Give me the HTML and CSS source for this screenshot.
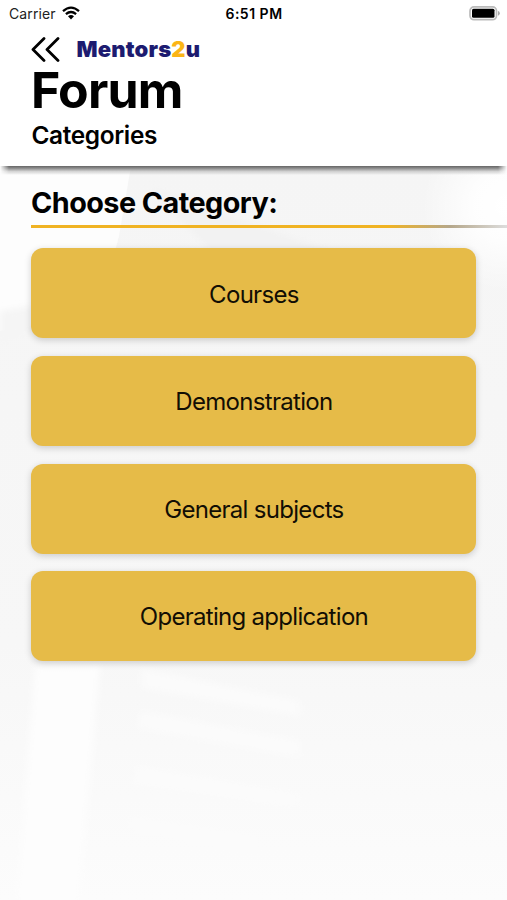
FILE: index.html
```html
<!DOCTYPE html>
<html lang="en">
<head>
<meta charset="utf-8">
<title>Mentors2u Forum</title>
<link rel="stylesheet" href="styles.css">
</head>
<body>
<header class="header">
  <div class="status">
    <div class="carrier"><span class="carrier-name">Carrier</span>
      <svg class="wifi" viewBox="0 0 18 14"><g fill="none" stroke="#000" stroke-width="2.3"><path d="M1 5.1Q9-1.9 17 5.1"/><path d="M3.9 8.2Q9 3.9 14.1 8.2"/></g><path d="M6 10.3Q9 7.8 12 10.3L9 13.4Z"/></svg>
    </div>
    <div class="time">6:51 PM</div>
    <svg class="battery" viewBox="0 0 32 15"><rect x="1" y=".9" width="26.5" height="12.8" rx="4" fill="#fff" stroke="#bbb" stroke-width="1.7"/><rect x="3" y="2.8" width="22.5" height="9" rx="1.5"/><path d="M29 5Q30.8 5.5 30.8 7.3T29 9.7Z" fill="#aaa"/></svg>
  </div>
  <div class="brand">
    <svg class="back" viewBox="0 0 29 25"><g fill="none" stroke="#000" stroke-width="2.8" stroke-linecap="round" stroke-linejoin="round"><path d="M13 1.5L2 12.5L13 23.5"/><path d="M27 1.5L16 12.5L27 23.5"/></g></svg>
    <div class="logo">Mentors<span class="two">2</span>u</div>
  </div>
  <h1 class="title">Forum</h1>
  <h2 class="subtitle">Categories</h2>
</header>
<main class="content">
  <svg class="backdrop" viewBox="0 0 507 734" preserveAspectRatio="none">
    <defs>
      <linearGradient id="base" x1="0" y1="0" x2="0" y2="1"><stop offset="0" stop-color="#f5f5f5"/><stop offset=".65" stop-color="#f7f7f7"/><stop offset="1" stop-color="#fcfcfc"/></linearGradient>
      <radialGradient id="edge" gradientUnits="userSpaceOnUse" cx="507" cy="40" r="85"><stop offset="0" stop-color="#fff"/><stop offset=".4" stop-color="#fff" stop-opacity=".85"/><stop offset="1" stop-color="#fff" stop-opacity="0"/></radialGradient>
      <filter id="soft" x="-20%" y="-20%" width="140%" height="140%"><feGaussianBlur stdDeviation="3"/></filter>
    </defs>
    <rect width="507" height="734" fill="url(#base)"/>
    <path d="M0 0H131L119 70L98 150L0 165Z" fill="#fdfdfd"/>
    <rect x="400" width="107" height="140" fill="url(#edge)"/>
    <g filter="url(#soft)">
      <path d="M0 145L32 140V165L0 180Z" fill="#f5f5f5"/>
      <path d="M35 500H100L78 750H15Z" fill="#fdfdfd"/>
      <path d="M142 503L300 535V550L142 522ZM141 545L300 575V592L137 562ZM137 600L300 628V642L132 618ZM130 650L258 670V690L128 665Z" fill="#fbfbfb"/>
      <path d="M150 22L330 85L400 150L230 105Z" fill="#f2f2f2"/>
    </g>
  </svg>
  <h2 class="heading">Choose Category:</h2>
  <div class="rule"></div>
  <nav class="list">
    <a class="card">Courses</a>
    <a class="card">Demonstration</a>
    <a class="card">General subjects</a>
    <a class="card">Operating application</a>
  </nav>
</main>
</body>
</html>
```
FILE: styles.css
```css
* { box-sizing: border-box; }
body {
  margin: 0;
  height: 900px;
  display: flex;
  flex-direction: column;
  overflow: hidden;
  background: #fff;
  color: #000;
  font-family: Inter, "Liberation Sans", sans-serif;
}
.header {
  height: 166px;
  position: relative;
  z-index: 1;
  background: #fff;
}
.header::after {
  content: "";
  position: absolute;
  inset: 100% 0 auto;
  height: 9px;
  background: linear-gradient(#656565, #8c8c8c 25%, rgba(150, 150, 150, .4) 60%, transparent);
  mask-image: linear-gradient(90deg, transparent, #000 9px, #000 498px, transparent);
}
.status {
  height: 27px;
  display: grid;
  grid-template-columns: 1fr auto 1fr;
  align-items: center;
  padding: 0 6px 0 9px;
}
.carrier { display: flex; align-items: center; gap: 6px; font-size: 14px; color: #222; letter-spacing: .1px; }
.wifi { width: 18px; height: 14px; margin-top: -1px; }
.time { font-size: 14px; font-weight: 600; letter-spacing: .5px; margin-right: 2px; }
.battery { width: 32px; height: 15px; justify-self: end; margin-top: -1px; }
.brand { height: 43px; padding-left: 31px; display: flex; align-items: center; gap: 16.5px; }
.back { width: 29px; height: 25px; margin-top: 2px; }
.logo { font-size: 22px; line-height: 26px; font-weight: 900; color: #1d1b70; letter-spacing: .2px; }
.two { color: #fbb516; }
.title, .subtitle, .heading { margin: 0; padding-left: 31px; white-space: nowrap; }
.title { font-size: 50px; line-height: 40px; font-weight: 700; letter-spacing: -.8px; }
.subtitle { margin-top: 10px; padding-left: 31.5px; font-size: 24.4px; line-height: 31px; font-weight: 600; letter-spacing: -.35px; }
.content { position: relative; flex: 1; }
.backdrop { position: absolute; inset: 0; width: 100%; height: 100%; z-index: -1; }
.heading { padding-top: 18px; font-size: 28.8px; line-height: 37px; font-weight: 700; letter-spacing: -.55px; }
.rule {
  margin: 4px 0 0 31.4px;
  height: 3px;
  background: linear-gradient(90deg, #f0b323 75%, #b5a78a 88%, #ddd 100%);
}
.list { padding: 20.4px 30.6px 0 31.4px; display: flex; flex-direction: column; gap: 17.6px; }
.card {
  height: 90px;
  display: flex;
  align-items: center;
  justify-content: center;
  padding-top: 1.6px;
  border-radius: 12px;
  background: #e6bb48;
  box-shadow: 0 2px 7px rgba(0, 0, 0, .18);
  font-size: 24px;
  letter-spacing: -.7px;
  color: #120e04;
}
```
